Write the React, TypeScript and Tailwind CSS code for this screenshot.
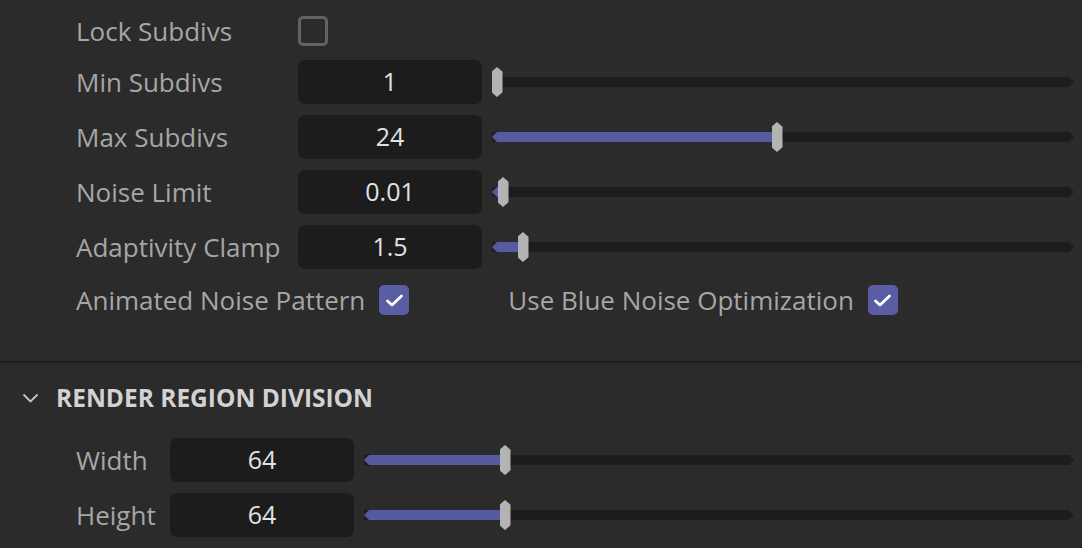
import React from 'react'

const font = { fontFamily: '"Open Sans", "Noto Sans", sans-serif' }

function Check({ checked }: { checked: boolean }) {
  if (!checked) {
    return <div className="w-[30px] h-[30px] rounded-[5px] border-[3px] border-[#626262] shrink-0" />
  }
  return (
    <div className="w-[30px] h-[30px] rounded-[5px] bg-[#5a5ca4] flex items-center justify-center shrink-0">
      <svg width="19" height="15" viewBox="0 0 19 15" fill="none">
        <path d="M2.5 8 L7 12 L16.5 3" stroke="#ffffff" strokeWidth="2.8" strokeLinecap="round" strokeLinejoin="round" />
      </svg>
    </div>
  )
}

function Slider({ pos }: { pos: number }) {
  // pos = pixel offset of the thumb centre from the track's left end
  return (
    <div className="relative flex-1 h-[30px] mr-[8px]">
      <div className="absolute left-0 right-0 top-[10px] h-[10px] bg-[#1d1d1d] [clip-path:polygon(0_0,calc(100%-5px)_0,100%_50%,calc(100%-5px)_100%,0_100%)]" />
      <div
        className="absolute left-0 top-[10px] h-[10px] bg-[#565a9e] [clip-path:polygon(5px_0,100%_0,100%_100%,5px_100%,0_50%)]"
        style={{ width: pos }}
      />
      <div
        className="absolute top-0 w-[11px] h-[30px] bg-[#b3b3b3] [clip-path:polygon(50%_0,100%_16%,100%_84%,50%_100%,0_84%,0_16%)]"
        style={{ left: pos - 5.5 }}
      />
    </div>
  )
}

function Row({ label, value, pos, labelW }: { label: string; value: string; pos: number; labelW: string }) {
  return (
    <div className="flex items-center h-[44px]">
      <div className={`${labelW} shrink-0 text-[#a6a6a6] text-[26px]`}>{label}</div>
      <div className="w-[184px] h-[44px] rounded-[7px] bg-[#1c1c1c] flex items-center justify-center text-[#e2e2e2] text-[25px] shrink-0">
        {value}
      </div>
      <div className="w-[10px] shrink-0" />
      <Slider pos={pos} />
    </div>
  )
}

export default function App() {
  return (
    <div className="w-[1082px] h-[548px] bg-[#2b2b2b] overflow-hidden flex flex-col" style={font}>
      <div className="pl-[76px] pt-[9px] flex flex-col">
        <div className="flex items-center h-[44px]">
          <div className="w-[222px] text-[#a6a6a6] text-[26px]">Lock Subdivs</div>
          <Check checked={false} />
        </div>
        <div className="flex flex-col gap-[11px] mt-[7px]">
          <Row label="Min Subdivs" value="1" pos={5} labelW="w-[222px]" />
          <Row label="Max Subdivs" value="24" pos={285} labelW="w-[222px]" />
          <Row label="Noise Limit" value="0.01" pos={11} labelW="w-[222px]" />
          <Row label="Adaptivity Clamp" value="1.5" pos={31} labelW="w-[222px]" />
          <div className="flex items-center h-[40px] text-[#a6a6a6] text-[26px]">
            <span>Animated Noise Pattern</span>
            <div className="ml-[14px]"><Check checked /></div>
            <span className="ml-[99px]">Use Blue Noise Optimization</span>
            <div className="ml-[14px]"><Check checked /></div>
          </div>
        </div>
      </div>
      <div className="mt-[41px] h-[2px] bg-[#1e1e1e]" />
      <div className="flex items-center h-[44px] mt-[13px] pl-[22px]">
        <svg width="17" height="11" viewBox="0 0 17 11" fill="none">
          <path d="M1.5 1.5 L8.5 8.5 L15.5 1.5" stroke="#c4c4c4" strokeWidth="1.8" />
        </svg>
        <span className="ml-[17px] text-[#d2d2d2] text-[24.5px] font-bold">RENDER REGION DIVISION</span>
      </div>
      <div className="pl-[76px] flex flex-col gap-[11px] mt-[18px]">
        <Row label="Width" value="64" pos={141} labelW="w-[94px]" />
        <Row label="Height" value="64" pos={141} labelW="w-[94px]" />
      </div>
    </div>
  )
}
